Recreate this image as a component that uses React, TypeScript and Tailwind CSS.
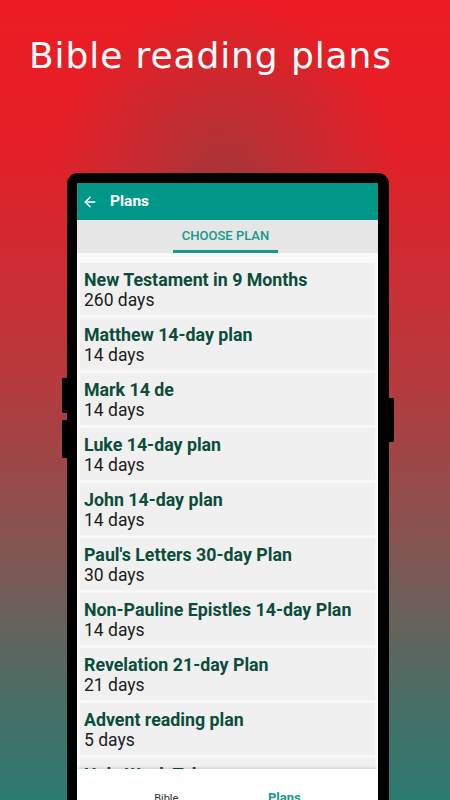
import { ArrowLeft } from 'lucide-react';

const plans = [
  { title: 'New Testament in 9 Months', days: '260 days' },
  { title: 'Matthew 14-day plan', days: '14 days' },
  { title: 'Mark 14 de', days: '14 days' },
  { title: 'Luke 14-day plan', days: '14 days' },
  { title: 'John 14-day plan', days: '14 days' },
  { title: "Paul's Letters 30-day Plan", days: '30 days' },
  { title: 'Non-Pauline Epistles 14-day Plan', days: '14 days' },
  { title: 'Revelation 21-day Plan', days: '21 days' },
  { title: 'Advent reading plan', days: '5 days' },
  { title: 'Holy Week Tale', days: '8 days' },
];

export default function App() {
  return (
    <div className="relative w-[450px] h-[800px] overflow-hidden bg-[image:radial-gradient(ellipse_38%_22%_at_50%_22%,rgba(150,60,62,0.75),rgba(150,60,62,0)),linear-gradient(to_bottom,#ec1c24_0%,#e51f27_18%,#b53a3e_48%,#7f5853_70%,#4a6d65_87%,#2c7b70_100%)]">
      <h1 className="pt-[34px] pl-[29px] text-white text-[36px] leading-[44px] tracking-[0.9px] font-['DejaVu_Sans',sans-serif]">
        Bible reading plans
      </h1>

      {/* phone */}
      <div className="relative mt-[95px] ml-[67px] w-[322px] h-[660px] bg-black rounded-[11px] pt-[10px] pl-[10px] pr-[11px]">
        <div className="absolute -left-[5px] top-[205px] w-[5px] h-[35px] bg-black rounded-l-[1px]" />
        <div className="absolute -left-[5px] top-[247px] w-[5px] h-[38px] bg-black rounded-l-[1px]" />
        <div className="absolute -right-[5px] top-[225px] w-[5px] h-[44px] bg-black rounded-r-[1px]" />

        <div className="relative h-[650px] bg-[#fafafa] overflow-hidden font-['Roboto',sans-serif]">
          <div className="h-[37px] bg-[#009688] flex items-center pl-[5px] text-white">
            <ArrowLeft size={16} strokeWidth={2.25} />
            <span className="ml-[12px] text-[15.5px] font-bold">Plans</span>
          </div>
          <div className="h-[33px] bg-[#e6e6e6] flex justify-center">
            <div className="w-[105px] -ml-[4px] h-full flex items-center justify-center border-b-[3px] border-[#16988a] pt-[2px] text-[13px] font-medium text-[#16988a]">
              CHOOSE PLAN
            </div>
          </div>

          <div className="flex flex-col gap-[3px] px-[3px] pt-[10px]">
            {plans.map((p) => (
              <div
                key={p.title}
                className="h-[52px] bg-[#f0f0f0] rounded-[2px] shadow-[0_0_1px_rgba(0,0,0,0.12)] pl-[4px] pt-[6px]"
              >
                <div className="text-[17.8px] leading-[21px] font-bold text-[#0b4d3a]">{p.title}</div>
                <div className="text-[17.5px] leading-[21px] text-[#1c1c1c]">{p.days}</div>
              </div>
            ))}
          </div>

          <div className="absolute left-0 right-0 top-[586px] h-[64px] bg-white shadow-[0_-1px_3px_rgba(0,0,0,0.15)] grid grid-cols-2">
            <div className="flex justify-center pt-[22px] pl-[28px] text-[11px] text-[#333]">Bible</div>
            <div className="flex justify-center pt-[19px] pr-[37px] text-[13px] font-bold text-[#16988a]">Plans</div>
          </div>
        </div>
      </div>
    </div>
  );
}
